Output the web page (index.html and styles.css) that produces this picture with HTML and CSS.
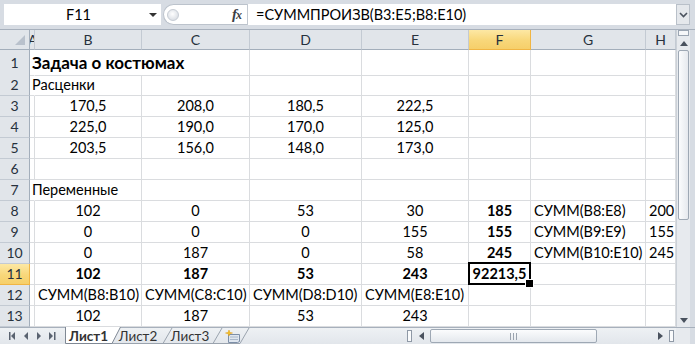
FILE: index.html
```html
<!DOCTYPE html>
<html lang="ru">
<head>
	<meta charset="UTF-8">
	<title>Задача о костюмах</title>
	<link rel="stylesheet" href="styles.css">
</head>
<body>
<div class="window">
	<div class="fbar">
		<div class="namebox"><span class="name">F11</span><span class="drop"></span></div>
		<div class="fxbox"><span class="knob"></span><span class="fx"><i>f</i><i class="fx-x">x</i></span></div>
		<div class="finput">=СУММПРОИЗВ(B3:E5;B8:E10)</div>
		<div class="fexpand">
			<svg width="9" height="6" viewBox="0 0 9 6"><path d="M1 1 L4.5 4.5 L8 1" fill="none" stroke="#4a525e" stroke-width="1.6"/></svg>
		</div>
	</div>

	<div class="main">
		<div class="sheet">
			<div class="row head">
				<div class="corner"><span class="tri"></span></div>
				<div class="ch cha">A</div>
				<div class="ch">B</div>
				<div class="ch">C</div>
				<div class="ch">D</div>
				<div class="ch">E</div>
				<div class="ch sel">F</div>
				<div class="ch">G</div>
				<div class="ch">H</div>
			</div>
			<div class="row tall">
				<div class="rh">1</div>
				<div class="c a ov nr title">Задача о костюмах</div>
				<div class="c nr"></div>
				<div class="c"></div>
				<div class="c"></div>
				<div class="c"></div>
				<div class="c"></div>
				<div class="c"></div>
				<div class="c"></div>
			</div>
			<div class="row">
				<div class="rh">2</div>
				<div class="c a ov nr">Расценки</div>
				<div class="c"></div>
				<div class="c"></div>
				<div class="c"></div>
				<div class="c"></div>
				<div class="c"></div>
				<div class="c"></div>
				<div class="c"></div>
			</div>
			<div class="row">
				<div class="rh">3</div>
				<div class="c a"></div>
				<div class="c n">170,5</div>
				<div class="c n">208,0</div>
				<div class="c n">180,5</div>
				<div class="c n">222,5</div>
				<div class="c"></div>
				<div class="c"></div>
				<div class="c"></div>
			</div>
			<div class="row">
				<div class="rh">4</div>
				<div class="c a"></div>
				<div class="c n">225,0</div>
				<div class="c n">190,0</div>
				<div class="c n">170,0</div>
				<div class="c n">125,0</div>
				<div class="c"></div>
				<div class="c"></div>
				<div class="c"></div>
			</div>
			<div class="row">
				<div class="rh">5</div>
				<div class="c a"></div>
				<div class="c n">203,5</div>
				<div class="c n">156,0</div>
				<div class="c n">148,0</div>
				<div class="c n">173,0</div>
				<div class="c"></div>
				<div class="c"></div>
				<div class="c"></div>
			</div>
			<div class="row">
				<div class="rh">6</div>
				<div class="c a"></div>
				<div class="c"></div>
				<div class="c"></div>
				<div class="c"></div>
				<div class="c"></div>
				<div class="c"></div>
				<div class="c"></div>
				<div class="c"></div>
			</div>
			<div class="row">
				<div class="rh">7</div>
				<div class="c a ov nr">Переменные</div>
				<div class="c"></div>
				<div class="c"></div>
				<div class="c"></div>
				<div class="c"></div>
				<div class="c"></div>
				<div class="c"></div>
				<div class="c"></div>
			</div>
			<div class="row">
				<div class="rh">8</div>
				<div class="c a"></div>
				<div class="c n">102</div>
				<div class="c n">0</div>
				<div class="c n">53</div>
				<div class="c n">30</div>
				<div class="c n b">185</div>
				<div class="c">СУММ(B8:E8)</div>
				<div class="c">200</div>
			</div>
			<div class="row">
				<div class="rh">9</div>
				<div class="c a"></div>
				<div class="c n">0</div>
				<div class="c n">0</div>
				<div class="c n">0</div>
				<div class="c n">155</div>
				<div class="c n b">155</div>
				<div class="c">СУММ(B9:E9)</div>
				<div class="c">155</div>
			</div>
			<div class="row">
				<div class="rh">10</div>
				<div class="c a"></div>
				<div class="c n">0</div>
				<div class="c n">187</div>
				<div class="c n">0</div>
				<div class="c n">58</div>
				<div class="c n b">245</div>
				<div class="c">СУММ(B10:E10)</div>
				<div class="c">245</div>
			</div>
			<div class="row">
				<div class="rh sel">11</div>
				<div class="c a"></div>
				<div class="c n b">102</div>
				<div class="c n b">187</div>
				<div class="c n b">53</div>
				<div class="c n b">243</div>
				<div class="c n b active">92213,5</div>
				<div class="c"></div>
				<div class="c"></div>
			</div>
			<div class="row">
				<div class="rh">12</div>
				<div class="c a"></div>
				<div class="c">СУММ(B8:B10)</div>
				<div class="c">СУММ(C8:C10)</div>
				<div class="c">СУММ(D8:D10)</div>
				<div class="c">СУММ(E8:E10)</div>
				<div class="c"></div>
				<div class="c"></div>
				<div class="c"></div>
			</div>
			<div class="row">
				<div class="rh">13</div>
				<div class="c a"></div>
				<div class="c n">102</div>
				<div class="c n">187</div>
				<div class="c n">53</div>
				<div class="c n">243</div>
				<div class="c"></div>
				<div class="c"></div>
				<div class="c"></div>
			</div>
		</div>

		<div class="vscroll">
			<div class="vsplit"></div>
			<div class="sbtn"><svg width="8" height="5" viewBox="0 0 8 5"><path d="M0 5 L4 0 L8 5 Z" fill="#4a525e"/></svg></div>
			<div class="vthumb"></div>
			<div class="vtrack"></div>
			<div class="sbtn"><svg width="8" height="5" viewBox="0 0 8 5"><path d="M0 0 L4 5 L8 0 Z" fill="#4a525e"/></svg></div>
		</div>
		<div class="frame-r"></div>
	</div>

	<div class="tabbar">
		<div class="nav">
			<svg width="62" height="16" viewBox="0 0 62 16">
				<g fill="#5a6370">
					<rect x="9" y="4" width="1.5" height="8"/>
					<path d="M15 4 L11 8 L15 12 Z"/>
					<path d="M28 4 L24 8 L28 12 Z"/>
					<path d="M37 4 L41 8 L37 12 Z"/>
					<path d="M49 4 L53 8 L49 12 Z"/>
					<rect x="54" y="4" width="1.5" height="8"/>
				</g>
			</svg>
		</div>
		<div class="tabs">
			<svg class="tabshape" width="190" height="17" viewBox="0 0 190 17">
				<path d="M50 16.5 H178 M101 16.5 L110 1 M151 16.5 L160 1 M178 16.5 L187 1" fill="none" stroke="#9aa3ae"/>
				<path d="M3.5 0 V16.5 H50 L58.5 0 Z" fill="#fff"/>
				<path d="M3.5 0 V16.5 H50 L58.5 0" fill="none" stroke="#7f8894"/>
			</svg>
			<span class="tab on">Лист1</span>
			<span class="tab">Лист2</span>
			<span class="tab">Лист3</span>
			<span class="newtab">
				<svg width="16" height="13" viewBox="0 0 16 13">
					<path d="M3.5 4.5 H14.5 V11.5 L12.5 12.5 H3.5 Z" fill="#dfe6ef" stroke="#7d8fa8"/>
					<path d="M5 7 H13 M5 9.5 H13" stroke="#aab8ca"/>
					<path d="M4 0 L4.9 2.6 L7.5 3 L4.9 3.6 L4 6 L3.1 3.6 L0.5 3 L3.1 2.6 Z" fill="#f6c31b" stroke="#e39a10" stroke-width="0.5"/>
				</svg>
			</span>
		</div>
		<div class="spacer"></div>
		<div class="hscroll">
			<span class="hsplit"></span>
			<span class="hbtn"><svg width="5" height="8" viewBox="0 0 5 8"><path d="M5 0 L0 4 L5 8 Z" fill="#4a525e"/></svg></span>
			<span class="hthumb"><span class="grip"></span></span>
			<span class="htrack"></span>
			<span class="hbtn"><svg width="5" height="8" viewBox="0 0 5 8"><path d="M0 0 L5 4 L0 8 Z" fill="#4a525e"/></svg></span>
			<span class="hsplit"></span>
		</div>
		<div class="brcorner"></div>
		<div class="frame-r"></div>
	</div>
</div>
</body>
</html>
```

FILE: styles.css
```css
*{
	margin:0;
	padding:0;
	box-sizing:border-box;
}
body{
	background:#fff;
	font-family:Lato,"Noto Sans",sans-serif;
	color:#000;
}
.window{
	width:695px;
	height:344px;
	display:flex;
	flex-direction:column;
	background:#d9dee5;
	overflow:hidden;
}

/* formula bar */
.fbar{
	height:30px;
	display:flex;
	padding:4px 5px 4px 4px;
	background:#d7dce3;
	border-bottom:1px solid #a7b0bc;
}
.namebox{
	width:157px;
	display:flex;
	align-items:center;
	background:#fff;
	font-size:14.5px;
}
.name{
	flex:1;
	text-align:center;
	padding-left:4px;
}
.drop{
	width:0;
	height:0;
	margin-right:4px;
	border-left:4px solid transparent;
	border-right:4px solid transparent;
	border-top:4px solid #333;
}
.fxbox{
	width:84px;
	margin-left:2px;
	display:flex;
	align-items:center;
	justify-content:space-between;
	background:#fff;
	border:1px solid #bcc3cc;
	border-right:0;
	border-radius:11px 0 0 11px;
	padding:0 6px 0 3px;
}
.knob{
	width:12px;
	height:12px;
	border-radius:50%;
	border:1px solid #c6ccd4;
	background:radial-gradient(circle at 45% 40%,#ffffff 0,#eef0f3 35%,#d0d5dc 100%);
}
.fx{
	font-family:"Liberation Serif",serif;
	font-size:15px;
	font-weight:bold;
	color:#3b3f45;
	letter-spacing:-1px;
}
.fx-x{
	font-size:12px;
}
.finput{
	flex:1;
	background:#fff;
	border-left:1px solid #c3c9d1;
	padding-left:8px;
	font-size:14.5px;
	line-height:21px;
	white-space:nowrap;
}
.fexpand{
	width:14px;
	display:flex;
	align-items:center;
	justify-content:center;
	background:#e5e8ec;
	border:1px solid #b9c0c9;
}

/* sheet */
.main{
	height:297px;
	display:flex;
}
.sheet{
	width:676px;
	background:#fff;
	overflow:hidden;
	font-size:14.5px;
}
.row{
	display:grid;
	grid-template-columns:30px 5px 107px 108px 112px 107px 62px 115px 30px;
	height:21px;
}
.row.tall{
	height:25px;
}
.row.head{
	height:20px;
}
.c{
	border-right:1px solid #dadcdf;
	border-bottom:1px solid #dadcdf;
	padding:0 3px;
	line-height:20px;
	white-space:nowrap;
	overflow:hidden;
}
.tall .c{
	line-height:25px;
}
.c.a{
	padding:0 0 0 2px;
}
.n{
	text-align:center;
}
.b{
	font-weight:bold;
}
.ov{
	overflow:visible;
	position:relative;
	z-index:1;
}
.nr{
	border-right-color:transparent;
}
.title{
	font-size:17px;
	font-weight:bold;
}
.corner{
	background:#e1e5ea;
	border-right:1px solid #a3aebb;
	border-bottom:1px solid #a3aebb;
	display:flex;
	align-items:flex-end;
	justify-content:flex-end;
	padding:0 4px 4px 0;
}
.tri{
	width:0;
	height:0;
	border-left:10px solid transparent;
	border-bottom:10px solid #b9c1cc;
}
.ch{
	background:#e1e5ea;
	border-right:1px solid #c3cad3;
	border-bottom:1px solid #a3aebb;
	text-align:center;
	line-height:19px;
	font-size:14px;
	color:#27313d;
	overflow:hidden;
}
.ch.cha{
	text-indent:-2px;
}
.rh{
	background:#e1e5ea;
	border-right:1px solid #a3aebb;
	border-bottom:1px solid #c3cad3;
	text-align:center;
	line-height:20px;
	font-size:14px;
	color:#27313d;
}
.tall .rh{
	line-height:25px;
}
.ch.sel,.rh.sel{
	background:linear-gradient(#fde8a4,#f8d77a 55%,#f6cf6a);
	border-color:#f0b544;
}
.active{
	position:relative;
	z-index:2;
	overflow:visible;
}
.active::after{
	content:"";
	position:absolute;
	left:-1px;
	top:-2px;
	right:-1px;
	bottom:-1px;
	border:2px solid #000;
}
.active::before{
	content:"";
	position:absolute;
	right:-4px;
	bottom:-4px;
	width:7px;
	height:7px;
	background:#000;
	border:1px solid #fff;
	z-index:3;
}

/* vertical scrollbar */
.vscroll{
	width:14px;
	display:flex;
	flex-direction:column;
	background:#e7eaee;
	border-left:1px solid #cbd1d8;
}
.vsplit{
	height:6px;
	margin:0 1px;
	border:1px solid #9ba5b2;
	background:#f6f7f9;
}
.sbtn{
	height:14px;
	display:flex;
	align-items:center;
	justify-content:center;
}
.vthumb{
	height:170px;
	margin:0 1px;
	border:1px solid #9ea8b4;
	border-radius:2px;
	background:linear-gradient(90deg,#fbfcfd,#e6e9ee);
}
.vtrack{
	flex:1;
}
.frame-r{
	width:5px;
	background:#d7dce3;
}

/* sheet tabs */
.tabbar{
	height:17px;
	display:flex;
	border-top:1px solid #a7b0bc;
	background:linear-gradient(#eef1f4,#e2e6eb);
	font-size:13.5px;
	color:#333;
}
.nav{
	width:62px;
}
.tabs{
	width:190px;
	position:relative;
	display:flex;
	align-items:center;
}
.tabshape{
	position:absolute;
	left:0;
	top:-1px;
}
.tab{
	position:relative;
	width:52px;
	text-align:center;
	line-height:16px;
}
.tab.on{
	width:47px;
	margin-left:3px;
	font-weight:bold;
}
.newtab{
	position:relative;
	margin-left:9px;
	display:flex;
}
.spacer{
	flex:1;
}
.hscroll{
	width:271px;
	display:flex;
	align-items:center;
}
.hsplit{
	width:5px;
	height:12px;
	margin:0 2px;
	border:1px solid #8f99a6;
	background:#fafbfc;
}
.hbtn{
	width:14px;
	display:flex;
	justify-content:center;
}
.hthumb{
	width:167px;
	height:14px;
	margin-left:2px;
	border:1px solid #9ea8b4;
	border-radius:2px;
	background:linear-gradient(#fbfcfd,#e4e8ed);
	display:flex;
	align-items:center;
	justify-content:center;
}
.grip{
	width:7px;
	height:7px;
	border-left:1px solid #9aa3ae;
	border-right:1px solid #9aa3ae;
	background:linear-gradient(90deg,transparent 2px,#9aa3ae 2px,#9aa3ae 3px,transparent 3px);
}
.htrack{
	flex:1;
}
.brcorner{
	width:14px;
	background:#e7eaee;
}
```
